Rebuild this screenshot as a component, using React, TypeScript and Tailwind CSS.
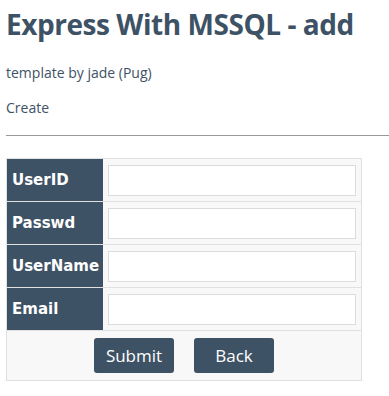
export default function App() {
  const fields = ["UserID", "Passwd", "UserName", "Email"];
  return (
    <div className="min-h-screen bg-white pl-[6px] pt-[4px] text-[#3e5266]" style={{ fontFamily: '"Open Sans", "Noto Sans", sans-serif' }}>
      <h1 className="text-[28px] leading-[40px] font-bold tracking-[-0.45px]">Express With MSSQL - add</h1>
      <p className="mt-[20px] text-[14px] leading-[18px]">template by jade (Pug)</p>
      <p className="mt-[17px] text-[14px] leading-[18px]">Create</p>
      <hr className="mt-[18px] border-t border-[#999]" />
      <table className="mt-[22px] w-[356px] border-collapse border border-[#e0e0e0] bg-[#f8f8f8]">
        <tbody>
          {fields.map((f) => (
            <tr key={f} className="h-[43px] border-b border-[#e0e0e0]">
              <td className="w-[96px] bg-[#3e5266] pl-[5px] text-[15px] font-bold text-white" style={{ fontFamily: '"DejaVu Sans", sans-serif' }}>
                {f}
              </td>
              <td className="px-[5px]">
                <input className="block h-[31px] w-full border border-[#dcdcdc] bg-white" />
              </td>
            </tr>
          ))}
          <tr className="h-[50px]">
            <td colSpan={2}>
              <div className="flex justify-center gap-[20px]">
                <button className="h-[35px] w-[80px] rounded-[3px] bg-[#3e5266] text-[17px] text-white">Submit</button>
                <button className="h-[35px] w-[80px] rounded-[3px] bg-[#3e5266] text-[17px] text-white">Back</button>
              </div>
            </td>
          </tr>
        </tbody>
      </table>
    </div>
  );
}
